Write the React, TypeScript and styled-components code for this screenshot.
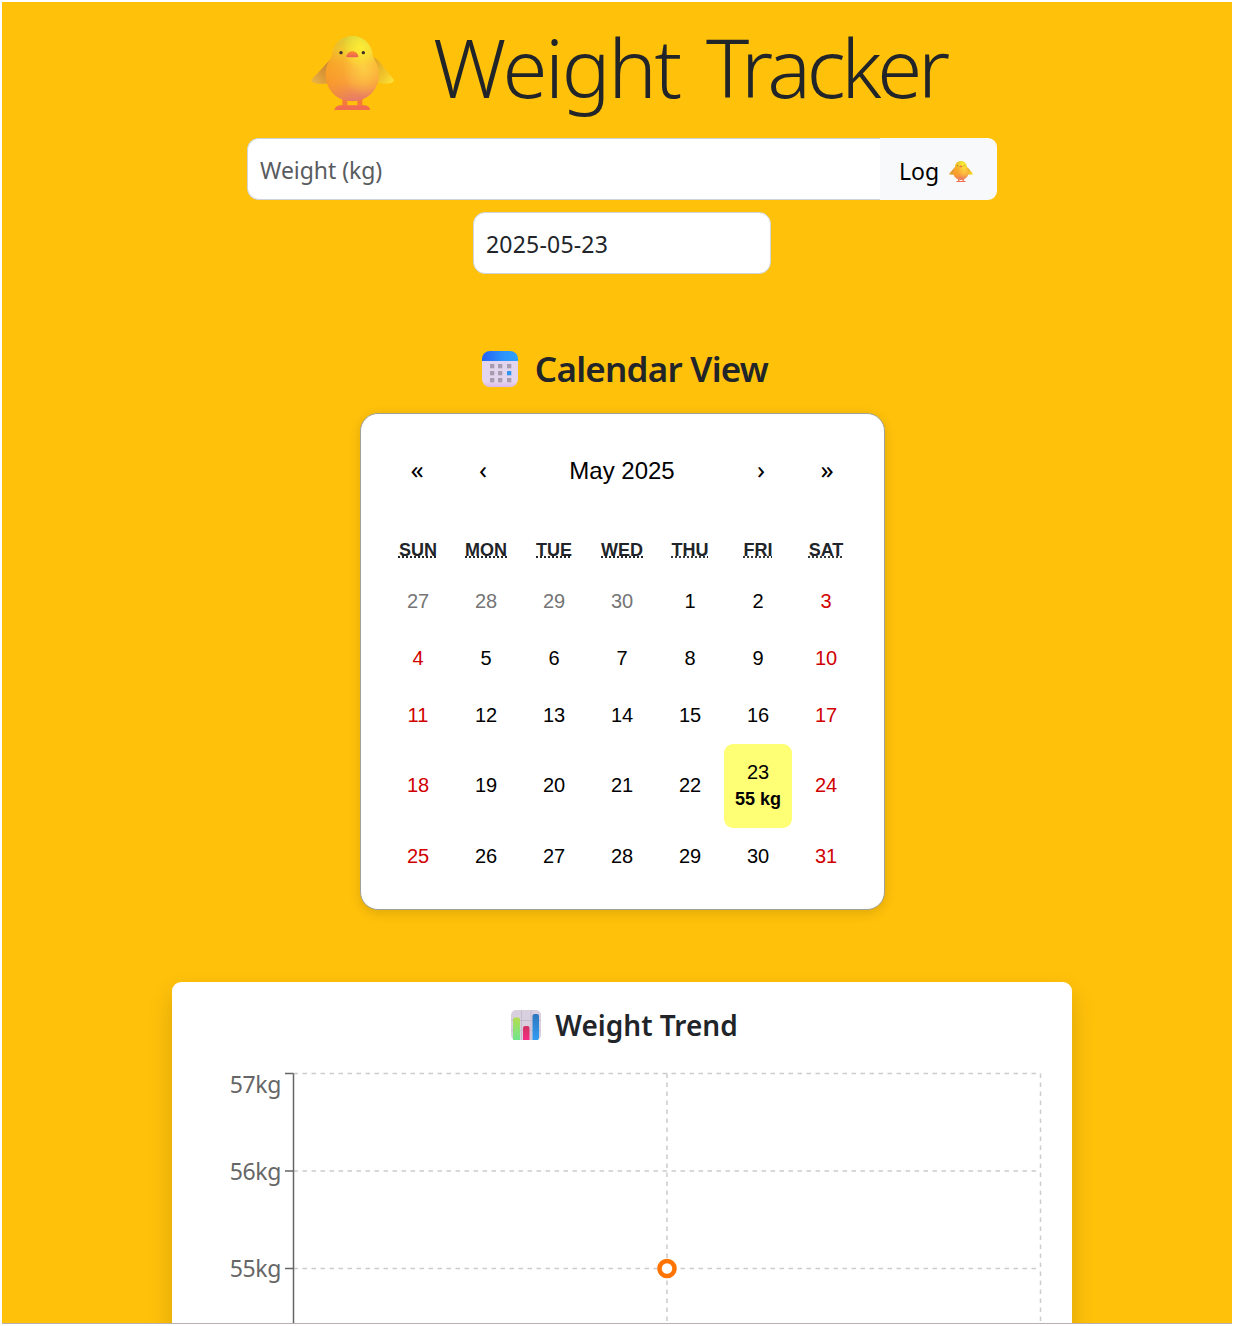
import React from 'react';
import styled, { createGlobalStyle } from 'styled-components';

const UI = `"Noto Sans", "Open Sans", sans-serif`;
const ARIAL = `"Liberation Sans", Arial, sans-serif`;

const GlobalStyle = createGlobalStyle`
  *, *::before, *::after { box-sizing: border-box; }
  body { margin: 0; background: #fff; font-family: ${UI}; color: #212529; overflow: hidden; }
  button, input { font: inherit; color: inherit; }
`;

const Frame = styled.div`
  height: 1326px;
  padding: 2px;
  overflow: hidden;
`;

const Page = styled.main`
  height: 1322px;
  padding: 25px 160px 0 170px;
  background: #ffc10a;
  border-bottom: 1px solid #b9b1b1;
  overflow: hidden;
  display: flex;
  flex-direction: column;
  align-items: center;

  > * { flex-shrink: 0; }
`;

const Title = styled.h1`
  margin: 0;
  height: 111px;
  width: 100%;
  padding-left: 139px;
  display: flex;
  align-items: flex-start;
  gap: 39px;
  font-weight: 300;
  font-size: 81.5px;
  line-height: 80px;
  white-space: nowrap;

  svg { margin-top: 9px; flex: none; }
`;

const Fit = styled.span<{ $spacing?: number; $word?: number }>`
  letter-spacing: ${(p) => p.$spacing ?? 0}px;
  word-spacing: ${(p) => p.$word ?? 0}px;
`;

const LogForm = styled.form`
  display: flex;
  width: 750px;
  height: 62px;
  margin-bottom: 12px;
`;

const Field = styled.input`
  border: 1px solid #ced4da;
  border-radius: 12px;
  background: #fff;
  padding: 2px 12px 0;
  font-size: 23px;
  outline: none;
  &::placeholder { color: #595c5f; opacity: 1; }
`;

const WeightField = styled(Field)`
  flex: 1;
  min-width: 0;
  border-radius: 12px 0 0 12px;
  border-right: 0;
  letter-spacing: -0.05px;
`;

const DateField = styled(Field)`
  width: 298px;
  height: 62px;
  letter-spacing: 0.2px;
`;

const LogButton = styled.button`
  width: 117px;
  border: 0;
  border-radius: 0 9px 9px 0;
  background: #f8f9fa;
  color: #000;
  display: flex;
  align-items: center;
  padding: 3px 0 0 19px;
  gap: 10px;
  font-size: 23px;

  svg { margin-top: 2px; }
`;

const SectionTitle = styled.h2`
  margin: 75px 0 24px;
  height: 40px;
  padding-left: 6px;
  display: flex;
  align-items: center;
  gap: 17px;
  font-size: 35px;
  font-weight: 600;
  line-height: 40px;
  white-space: nowrap;
`;

const CalendarCard = styled.section`
  width: 525px;
  height: 497px;
  padding: 24px 23.5px;
  background: #fff;
  border: 1px solid #a0a096;
  border-radius: 18px;
  box-shadow: 0 3px 12px rgba(0, 0, 0, 0.13);
  font-family: ${ARIAL};
`;

const CalendarNav = styled.nav`
  display: grid;
  grid-template-columns: 66px 66px 1fr 66px 66px;
  height: 66px;
  margin-bottom: 24px;
`;

const NavButton = styled.button`
  border: 0;
  padding: 0;
  background: none;
  color: #000;
  font-size: 24px;
`;

const ArrowButton = styled(NavButton)`
  padding-bottom: 5px;
  font-family: ${UI};
  font-size: 26px;
  line-height: 30px;
`;

const Weekdays = styled.div`
  display: grid;
  grid-template-columns: repeat(7, 1fr);
  height: 45px;
  align-items: center;
  justify-items: center;
  font-size: 18px;
  font-weight: 700;

  abbr {
    text-decoration: underline dotted;
    text-transform: uppercase;
  }
`;

const Days = styled.div`
  display: grid;
  grid-template-columns: repeat(7, 1fr);
  grid-template-rows: 57px 57px 57px 84px 57px;
`;

type Tone = 'muted' | 'weekend' | 'normal';
const toneColor: Record<Tone, string> = { muted: '#757575', weekend: '#d10000', normal: '#000' };

const Day = styled.button<{ $tone: Tone; $today?: boolean }>`
  border: 0;
  padding: ${(p) => (p.$today ? '2px 0 0' : '0 0 1.5px')};
  display: flex;
  flex-direction: column;
  align-items: center;
  justify-content: center;
  background: ${(p) => (p.$today ? '#ffff76' : 'transparent')};
  border-radius: 9px;
  color: ${(p) => toneColor[p.$tone]};
  font-size: 20px;
  line-height: 24px;

  strong { font-size: 18px; line-height: 30px; }
`;

const TrendCard = styled.section`
  width: 900px;
  height: 520px;
  margin-top: 72px;
  background: #fff;
  border-radius: 9px;
  box-shadow: 0 12px 24px rgba(0, 0, 0, 0.15);
`;

const TrendTitle = styled.h3`
  margin: 0;
  height: 88px;
  padding: 0 0 3px 5px;
  display: flex;
  align-items: center;
  justify-content: center;
  gap: 14px;
  font-size: 28px;
  font-weight: 600;
  white-space: nowrap;
`;

const Chart = styled.svg`
  display: block;
  font-family: ${UI};
  font-size: 23px;
  letter-spacing: -0.35px;
  fill: #666;
`;

function Chick({ width, id }: { width: number; id: string }) {
  const u = (n: string) => `url(#${id}-${n})`;
  const torso =
    'M186 47 C154 47 128 71 125 103 C124 117 106 128 106 162 C106 208 139 243 186 243 C232 243 266 208 266 162 C266 131 249 117 247 103 C244 71 218 47 186 47 Z';
  return (
    <svg width={width} height={(width * 223) / 249} viewBox="62 47 249 223" aria-hidden="true">
      <defs>
        <linearGradient id={`${id}-body`} x1="0" y1="0" x2="0" y2="1">
          <stop offset="0" stopColor="#d8d03c" />
          <stop offset="0.2" stopColor="#efd433" />
          <stop offset="0.42" stopColor="#fab332" />
          <stop offset="0.72" stopColor="#f99e3c" />
          <stop offset="1" stopColor="#e5786c" />
        </linearGradient>
        <radialGradient id={`${id}-glow`} cx="0.72" cy="0.52" r="0.4">
          <stop offset="0" stopColor="#ffd94a" stopOpacity="0.7" />
          <stop offset="1" stopColor="#ffd94a" stopOpacity="0" />
        </radialGradient>
        <radialGradient id={`${id}-head`} cx="0.66" cy="0.18" r="0.34">
          <stop offset="0" stopColor="#fdee35" stopOpacity="0.95" />
          <stop offset="1" stopColor="#fdee35" stopOpacity="0" />
        </radialGradient>
        <linearGradient id={`${id}-shade`} x1="0" y1="0" x2="1" y2="0">
          <stop offset="0" stopColor="#f6951c" stopOpacity="0.55" />
          <stop offset="0.5" stopColor="#f6951c" stopOpacity="0" />
        </linearGradient>
        <linearGradient id={`${id}-left`} x1="1" y1="0" x2="0" y2="1">
          <stop offset="0" stopColor="#bd7b36" />
          <stop offset="0.5" stopColor="#d89335" />
          <stop offset="1" stopColor="#edbb48" />
        </linearGradient>
        <linearGradient id={`${id}-right`} x1="0" y1="0" x2="1" y2="1">
          <stop offset="0" stopColor="#dc9c28" />
          <stop offset="0.65" stopColor="#f2c72b" />
          <stop offset="1" stopColor="#ffe83c" />
        </linearGradient>
        <linearGradient id={`${id}-beak`} x1="0" y1="0" x2="0" y2="1">
          <stop offset="0" stopColor="#ff8b29" />
          <stop offset="1" stopColor="#e8605c" />
        </linearGradient>
      </defs>
      <path d="M127 110 L66 175 Q58 183 70 187 Q90 194 115 188 Z" fill={u('left')} />
      <path d="M246 108 Q266 120 275 134 L307 174 Q315 184 302 188 Q282 192 260 187 Z" fill={u('right')} />
      <path d="M156 232h15v24h-15zM201 232h15v24h-15z" fill="#f5793a" />
      <path d="M132 270 Q134 255 153 255 H220 Q238 255 240 270 Z" fill="#f26d50" />
      <path d={torso} fill={u('body')} />
      <path d={torso} fill={u('shade')} />
      <path d={torso} fill={u('glow')} />
      <path d={torso} fill={u('head')} />
      <circle cx="152" cy="97" r="5" fill="#3c2b2b" />
      <circle cx="219" cy="97" r="5" fill="#3c2b2b" />
      <path d="M168 110 C168 100 177 93 186 93 C195 93 204 100 204 110 Q186 112 168 110 Z" fill={u('beak')} />
    </svg>
  );
}

function CalendarIcon() {
  return (
    <svg width="36" height="36" viewBox="0 0 36 36" aria-hidden="true">
      <defs>
        <linearGradient id="cal-top" x1="0" y1="0" x2="1" y2="0">
          <stop offset="0" stopColor="#2462f3" />
          <stop offset="0.6" stopColor="#2e94fc" />
          <stop offset="1" stopColor="#2da1fb" />
        </linearGradient>
        <linearGradient id="cal-base" x1="0" y1="0" x2="0" y2="1">
          <stop offset="0.8" stopColor="#e3d5ed" />
          <stop offset="1" stopColor="#dbb8ee" />
        </linearGradient>
      </defs>
      <path d="M0 8h36v20a8 8 0 0 1-8 8H8a8 8 0 0 1-8-8z" fill="url(#cal-base)" />
      <path d="M0 10V8a8 8 0 0 1 8-8h20a8 8 0 0 1 8 8v2z" fill="url(#cal-top)" />
      {[13, 20, 27].map((y) =>
        [8, 16, 25].map((x) => (
          <rect key={`${x}-${y}`} x={x} y={y} width="4.3" height="4.3" fill={x === 25 && y === 20 ? '#2f95ee' : '#a79bb0'} />
        )),
      )}
    </svg>
  );
}

function BarsIcon() {
  return (
    <svg width="30" height="30" viewBox="0 0 30 30" aria-hidden="true">
      <defs>
        <linearGradient id="bar-green" x1="0" y1="0" x2="0" y2="1">
          <stop offset="0" stopColor="#b3dd50" />
          <stop offset="1" stopColor="#6fe58d" />
        </linearGradient>
        <linearGradient id="bar-pink" x1="0" y1="0" x2="0" y2="1">
          <stop offset="0" stopColor="#cf3461" />
          <stop offset="1" stopColor="#f62c83" />
        </linearGradient>
        <linearGradient id="bar-blue" x1="0" y1="0" x2="0" y2="1">
          <stop offset="0" stopColor="#2d76bd" />
          <stop offset="1" stopColor="#329cf2" />
        </linearGradient>
      </defs>
      <rect width="30" height="30" rx="5" fill="#d8d0df" />
      <path d="M10.5 0v30M20 0v30M0 10.5h30M0 20.5h30" stroke="#c4bccd" strokeWidth="1" />
      <path d="M2 30V9.500a2 2 0 0 1 2-2h3a2 2 0 0 1 2 2V30z" fill="url(#bar-green)" />
      <path d="M12 30V18a2 2 0 0 1 2-2h2.500a2 2 0 0 1 2 2v12z" fill="url(#bar-pink)" />
      <path d="M21.500 30V6a2 2 0 0 1 2-2h2.500a2 2 0 0 1 2 2v22l-1 2z" fill="url(#bar-blue)" />
    </svg>
  );
}

const weekdays = ['Sun', 'Mon', 'Tue', 'Wed', 'Thu', 'Fri', 'Sat'];
const days = Array.from({ length: 35 }, (_, i) => {
  const n = i < 4 ? 27 + i : i - 3;
  const tone: Tone = i < 4 ? 'muted' : i % 7 === 0 || i % 7 === 6 ? 'weekend' : 'normal';
  return { n, tone, weight: i === 26 ? '55 kg' : undefined };
});

const ticks = [
  { label: '57kg', y: 3.5, textY: 23 },
  { label: '56kg', y: 101, textY: 110 },
  { label: '55kg', y: 198.5, textY: 207 },
];

export default function App() {
  return (
    <Frame>
      <GlobalStyle />
      <Page>
        <Title>
          <Chick width={83} id="hero" />
          <span>
            <Fit $spacing={-2.3} $word={7}>{'Weight '}</Fit>
            <Fit $spacing={-4.2}>Tracker</Fit>
          </span>
        </Title>
        <LogForm onSubmit={(e) => e.preventDefault()}>
          <WeightField placeholder="Weight (kg)" />
          <LogButton type="submit">
            Log <Chick width={24} id="log" />
          </LogButton>
        </LogForm>
        <DateField defaultValue="2025-05-23" />

        <SectionTitle>
          <CalendarIcon />
          <Fit $spacing={-0.75}>Calendar View</Fit>
        </SectionTitle>
        <CalendarCard>
          <CalendarNav>
            <ArrowButton>«</ArrowButton>
            <ArrowButton>‹</ArrowButton>
            <NavButton>May 2025</NavButton>
            <ArrowButton>›</ArrowButton>
            <ArrowButton>»</ArrowButton>
          </CalendarNav>
          <Weekdays>
            {weekdays.map((d) => (
              <abbr key={d}>{d}</abbr>
            ))}
          </Weekdays>
          <Days>
            {days.map((d, i) => (
              <Day key={i} $tone={d.tone} $today={!!d.weight}>
                {d.n}
                {d.weight && <strong>{d.weight}</strong>}
              </Day>
            ))}
          </Days>
        </CalendarCard>

        <TrendCard>
          <TrendTitle>
            <BarsIcon />
            <Fit $spacing={0}>Weight Trend</Fit>
          </TrendTitle>
          <Chart width="900" height="432" viewBox="0 0 900 432">
            <g fill="none" stroke="#ccc" strokeWidth="1.5" strokeDasharray="4.5 4.5">
              {ticks.map((t) => (
                <path key={t.label} d={`M121.500 ${t.y}H868.500`} />
              ))}
              <path d="M495 3.500V432M868.500 3.500V432" />
            </g>
            <path d="M121.500 3.500V432M113 3.500h8.500M113 101h8.500M113 198.500h8.500" fill="none" stroke="#666" strokeWidth="1.500" />
            {ticks.map((t) => (
              <text key={t.label} x="109" y={t.textY} textAnchor="end">
                {t.label}
              </text>
            ))}
            <circle cx="495" cy="198.500" r="7.500" fill="#fff" stroke="#ff7300" strokeWidth="4.500" />
          </Chart>
        </TrendCard>
      </Page>
    </Frame>
  );
}
